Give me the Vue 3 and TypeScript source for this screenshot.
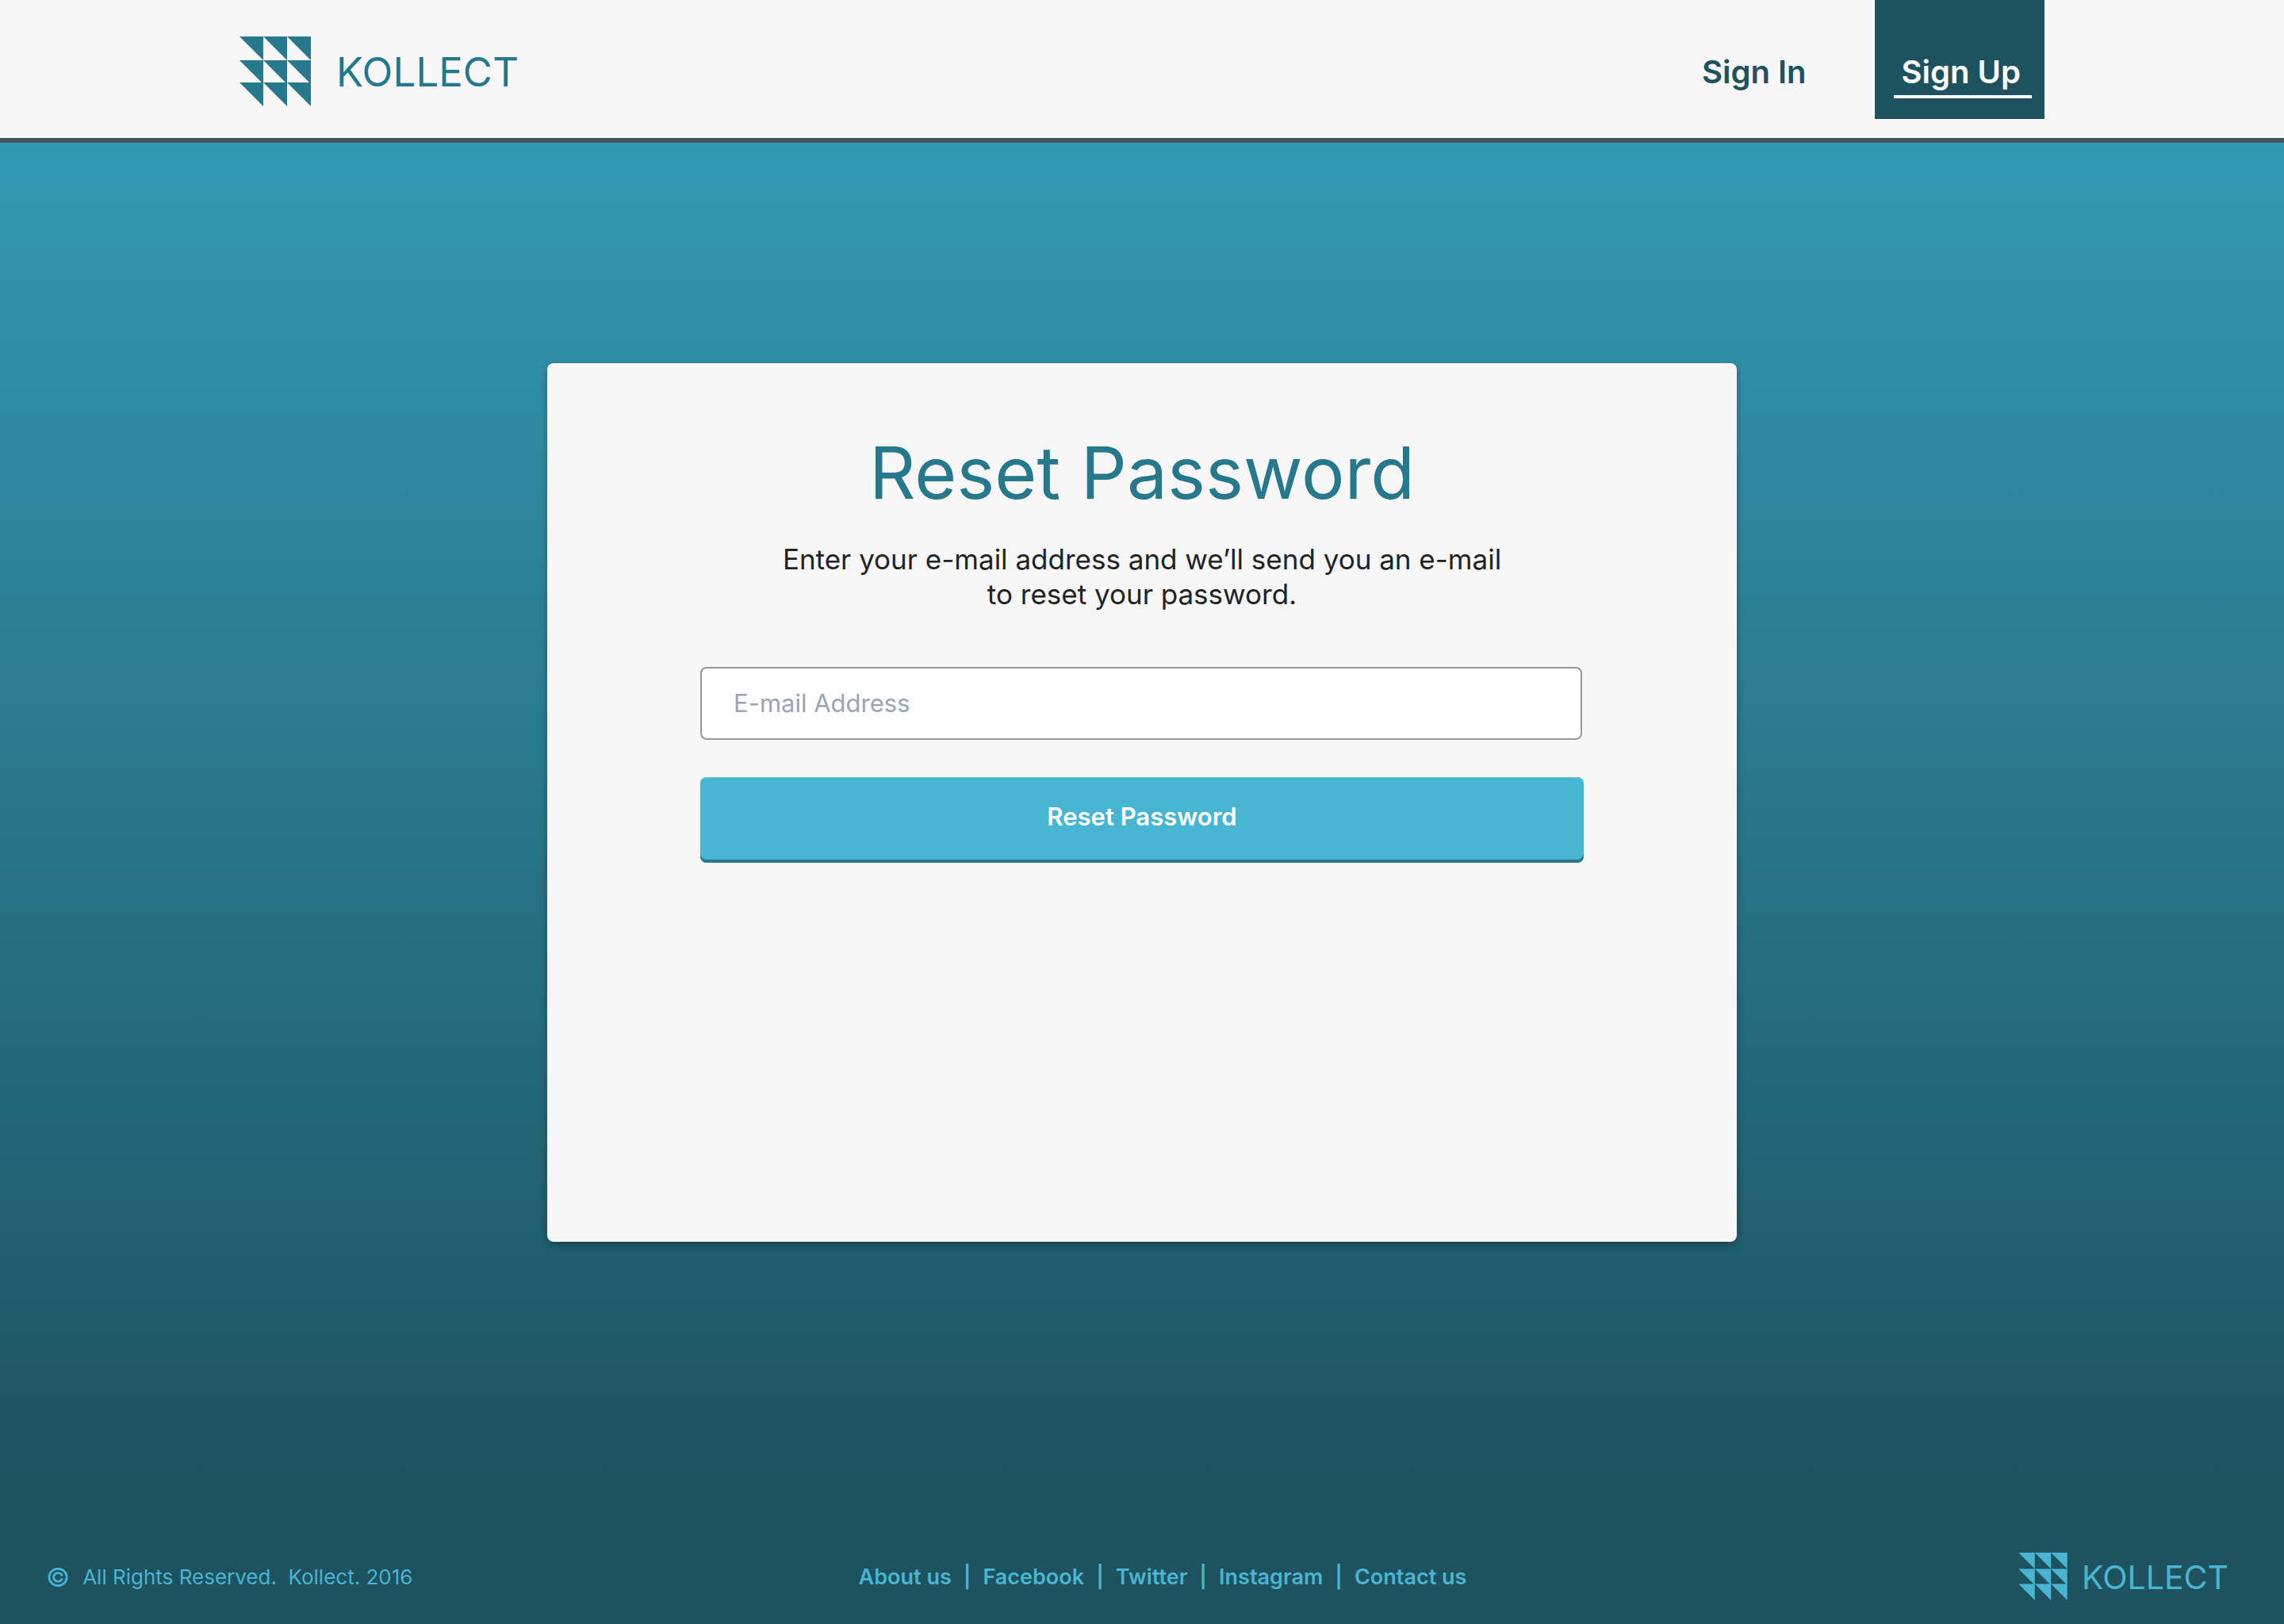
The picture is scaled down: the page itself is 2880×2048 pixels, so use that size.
<script setup lang="ts">
import { ref } from 'vue'

interface FooterLink {
  label: string
  href: string
}

const email = ref('')

const links: FooterLink[] = [
  { label: 'About us', href: '#about' },
  { label: 'Facebook', href: '#facebook' },
  { label: 'Twitter', href: '#twitter' },
  { label: 'Instagram', href: '#instagram' },
  { label: 'Contact us', href: '#contact' },
]

// Nine right triangles on a three by three grid
const columns = [0, 30, 60]
const rows = [0, 30, 58]
const markPath = rows
  .flatMap((y) => columns.map((x) => `M${x} ${y}h30v30z`))
  .join('')
</script>

<template>
  <div class="page">
    <header class="header">
      <a class="brand" href="#home">
        <svg class="mark" viewBox="0 0 90 88" aria-hidden="true"><path :d="markPath" /></svg>
        <span class="name">KOLLECT</span>
      </a>
      <nav class="nav">
        <a class="nav-link" href="#sign-in"><span class="nav-text">Sign In</span></a>
        <a class="nav-link active" href="#sign-up"><span class="nav-text">Sign Up</span></a>
      </nav>
    </header>

    <main class="main">
      <section class="card">
        <h1 class="title">Reset Password</h1>
        <p class="intro">Enter your e-mail address and we’ll send you an e-mail<br />to reset your password.</p>
        <form class="form" @submit.prevent>
          <input v-model="email" class="field" type="email" placeholder="E-mail Address" aria-label="E-mail Address" />
          <button class="submit" type="submit">Reset Password</button>
        </form>
      </section>
    </main>

    <footer class="footer">
      <p class="legal"><span class="copy">©</span><span class="rights">All Rights Reserved.&nbsp; Kollect. 2016</span></p>
      <ul class="links">
        <li v-for="link in links" :key="link.label" class="item">
          <a class="link" :href="link.href">{{ link.label }}</a>
        </li>
      </ul>
      <a class="brand small" href="#home">
        <svg class="mark" viewBox="0 0 90 88" aria-hidden="true"><path :d="markPath" /></svg>
        <span class="name">KOLLECT</span>
      </a>
    </footer>
  </div>
</template>

<style>
body {
  margin: 0;
}
</style>

<style scoped>
.page {
  display: flex;
  flex-direction: column;
  min-height: 100vh;
  font-family: Inter, "Liberation Sans", sans-serif;
  background: #1d525e;
}

.page * {
  box-sizing: border-box;
}

a {
  color: inherit;
  text-decoration: none;
}

.header {
  display: flex;
  justify-content: space-between;
  height: 180px;
  padding: 0 302px;
  background: #f7f7f7;
  border-bottom: 6px solid #44555b;
}

.brand {
  display: flex;
  align-items: center;
  gap: 32px;
  padding-top: 6px;
  color: #26788d;
}

.mark {
  width: 90px;
  height: 88px;
  fill: currentColor;
}

.name {
  padding-top: 2px;
  font-size: 51px;
  line-height: 60px;
}

.nav {
  display: flex;
  align-items: flex-start;
  gap: 56px;
  color: #1d525e;
  font-size: 40px;
  font-weight: 600;
  line-height: 44px;
}

.nav-link {
  display: flex;
  height: 150px;
  padding: 69px 16px 0 24px;
}

.nav-text {
  height: 55px;
  padding: 0 14px 0 10px;
}

.active {
  background: #1d525e;
  color: #ffffff;
}

.active .nav-text {
  border-bottom: 4px solid #ffffff;
}

.main {
  display: flex;
  flex: 1;
  justify-content: center;
  align-items: flex-start;
  padding: 278px 24px 100px;
  background: linear-gradient(#3399b4, #1d525e 98%);
}

.card {
  display: flex;
  flex-direction: column;
  align-items: center;
  width: 100%;
  max-width: 1500px;
  min-height: 1108px;
  padding-top: 88px;
  background: #f7f7f7;
  border-radius: 8px;
  box-shadow: 0 4px 10px rgba(0, 0, 0, 0.3);
}

.title {
  margin: 0;
  color: #26788d;
  font-size: 91px;
  font-weight: 400;
  line-height: 100px;
}

.intro {
  margin: 37px 0 70px;
  color: #222222;
  font-size: 35px;
  line-height: 44px;
  text-align: center;
}

.form {
  display: flex;
  flex-direction: column;
  gap: 47px;
  width: 100%;
  max-width: 1114px;
}

.field {
  height: 92px;
  margin-right: 2px;
  padding: 0 40px 2px;
  border: 2px solid #979797;
  border-radius: 8px;
  background: #ffffff;
  color: #222222;
  font: inherit;
  font-size: 31px;
}

.field::placeholder {
  color: #9aa5b1;
  opacity: 1;
}

.submit {
  height: 108px;
  padding: 0 0 10px;
  border: 0;
  border-radius: 8px;
  background: #48b5d2;
  box-shadow: inset 0 -4px #26788d, inset 0 1px #6cc4db;
  color: #ffffff;
  font: inherit;
  font-size: 31px;
  font-weight: 600;
}

.footer {
  display: grid;
  grid-template-columns: 1fr auto 1fr;
  align-items: center;
  height: 120px;
  padding: 0 70px 0 58px;
  background: #1d525e;
  color: #48b5d2;
  font-size: 26px;
  line-height: 32px;
}

.legal {
  display: flex;
  align-items: center;
  gap: 16px;
  margin: 0;
  padding-top: 2px;
}

.copy {
  font-size: 33px;
}

.links {
  display: flex;
  margin: 0;
  padding: 2px 0 0 64px;
  font-size: 27px;
  font-weight: 600;
  list-style: none;
}

.item + .item::before {
  content: "|";
  margin: 0 15px;
}

.small {
  gap: 18px;
  justify-self: end;
  padding-top: 0;
  color: #48b5d2;
}

.small .mark {
  width: 62px;
  height: 60px;
}

.small .name {
  font-size: 41px;
  line-height: 48px;
}
</style>
